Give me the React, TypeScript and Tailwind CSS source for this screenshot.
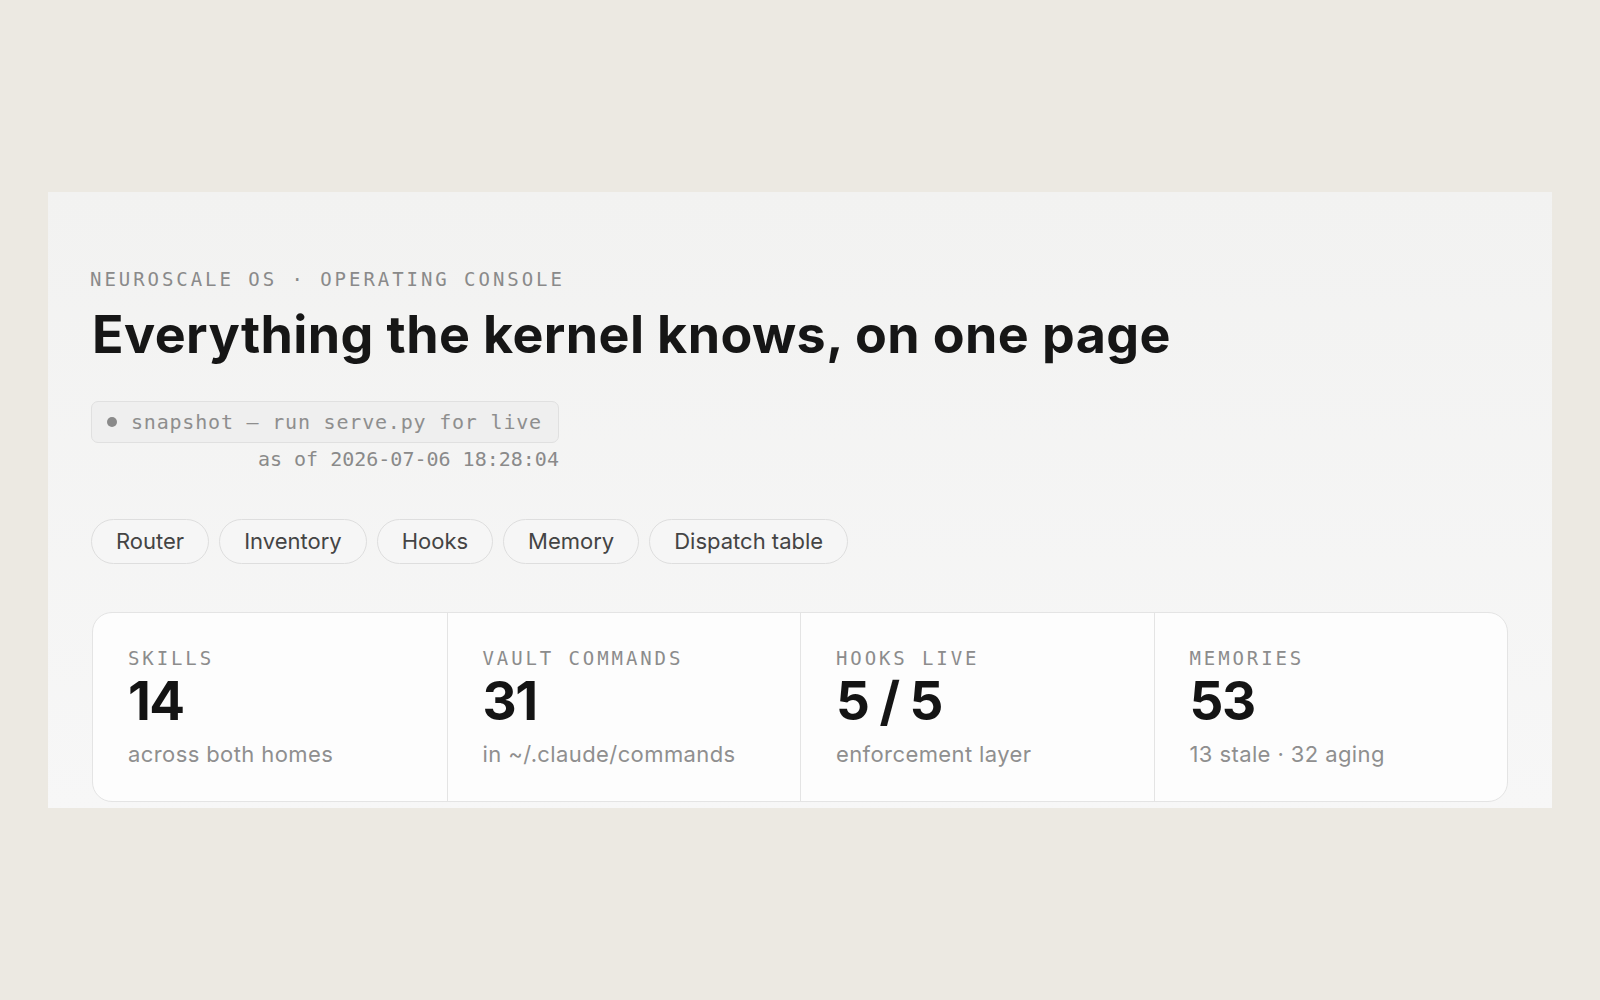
import React from "react";

const MONO = { fontFamily: '"DejaVu Sans Mono", "Liberation Mono", monospace' };

const TABS = ["Router", "Inventory", "Hooks", "Memory", "Dispatch table"];

const STATS = [
  { label: "SKILLS", value: "14", sub: "across both homes" },
  { label: "VAULT COMMANDS", value: "31", sub: "in ~/.claude/commands" },
  { label: "HOOKS LIVE", value: "5 / 5", sub: "enforcement layer" },
  { label: "MEMORIES", value: "53", sub: "13 stale · 32 aging" },
];

export default function App() {
  return (
    <div
      className="min-h-screen w-full bg-[#ece9e2] pt-[192px] px-[48px] font-['Inter',sans-serif]"
    >
      <div className="w-[1504px] h-[616px] overflow-hidden bg-gradient-to-b from-[#f2f2f1] to-[#f7f7f7] pl-[42px] pr-[44px] pt-[75px]">
        {/* Eyebrow */}
        <div
          className="text-[19px] leading-[24px] tracking-[2.95px] text-[#8a8a8a]"
          style={MONO}
        >
          NEUROSCALE OS · OPERATING CONSOLE
        </div>

        {/* Title */}
        <h1 className="mt-[13px] pl-[2px] text-[52px] leading-[62px] font-bold tracking-[0.4px] text-[#161616]">
          Everything the kernel knows, on one page
        </h1>

        {/* Snapshot status */}
        <div className="mt-[35px] ml-[1px] inline-flex flex-col items-end">
          <div className="flex items-center gap-[14px] h-[42px] rounded-[7px] border border-[#e0e0e0] bg-[#efefef] pl-[15px] pr-[16px]">
            <span className="w-[10px] h-[10px] rounded-full bg-[#8a8a8a]" />
            <span
              className="text-[20px] leading-[24px] tracking-[0.8px] text-[#8e8e8e]"
              style={MONO}
            >
              snapshot — run serve.py for live
            </span>
          </div>
          <div
            className="mt-[4px] text-[20px] leading-[24px] text-[#8a8a8a]"
            style={MONO}
          >
            as of 2026-07-06 18:28:04
          </div>
        </div>

        {/* Section tabs */}
        <div className="mt-[48px] ml-[1px] flex gap-[10px]">
          {TABS.map((t) => (
            <button
              key={t}
              className="h-[45px] rounded-full border border-[#dedede] bg-[#f6f6f6] px-[24px] text-[22px] leading-[27px] text-[#444444]"
            >
              {t}
            </button>
          ))}
        </div>

        {/* Stat strip */}
        <div className="mt-[48px] ml-[2px] grid grid-cols-4 rounded-[20px] border border-[#e4e4e4] bg-[#fdfdfd]">
          {STATS.map((s, i) => (
            <div
              key={s.label}
              className={
                "pl-[35px] pt-[33px] pb-[33px] " +
                (i > 0 ? "border-l border-[#e4e4e4]" : "")
              }
            >
              <div
                className="text-[19px] leading-[24px] tracking-[2.9px] text-[#8c8c8c]"
                style={MONO}
              >
                {s.label}
              </div>
              <div className="mt-[1px] text-[53px] leading-[60px] font-bold tracking-[-1.5px] text-[#141414]">
                {s.value}
              </div>
              <div className="mt-[9px] text-[22px] leading-[28px] tracking-[0.4px] text-[#8f8f8f]">
                {s.sub}
              </div>
            </div>
          ))}
        </div>
      </div>
    </div>
  );
}
